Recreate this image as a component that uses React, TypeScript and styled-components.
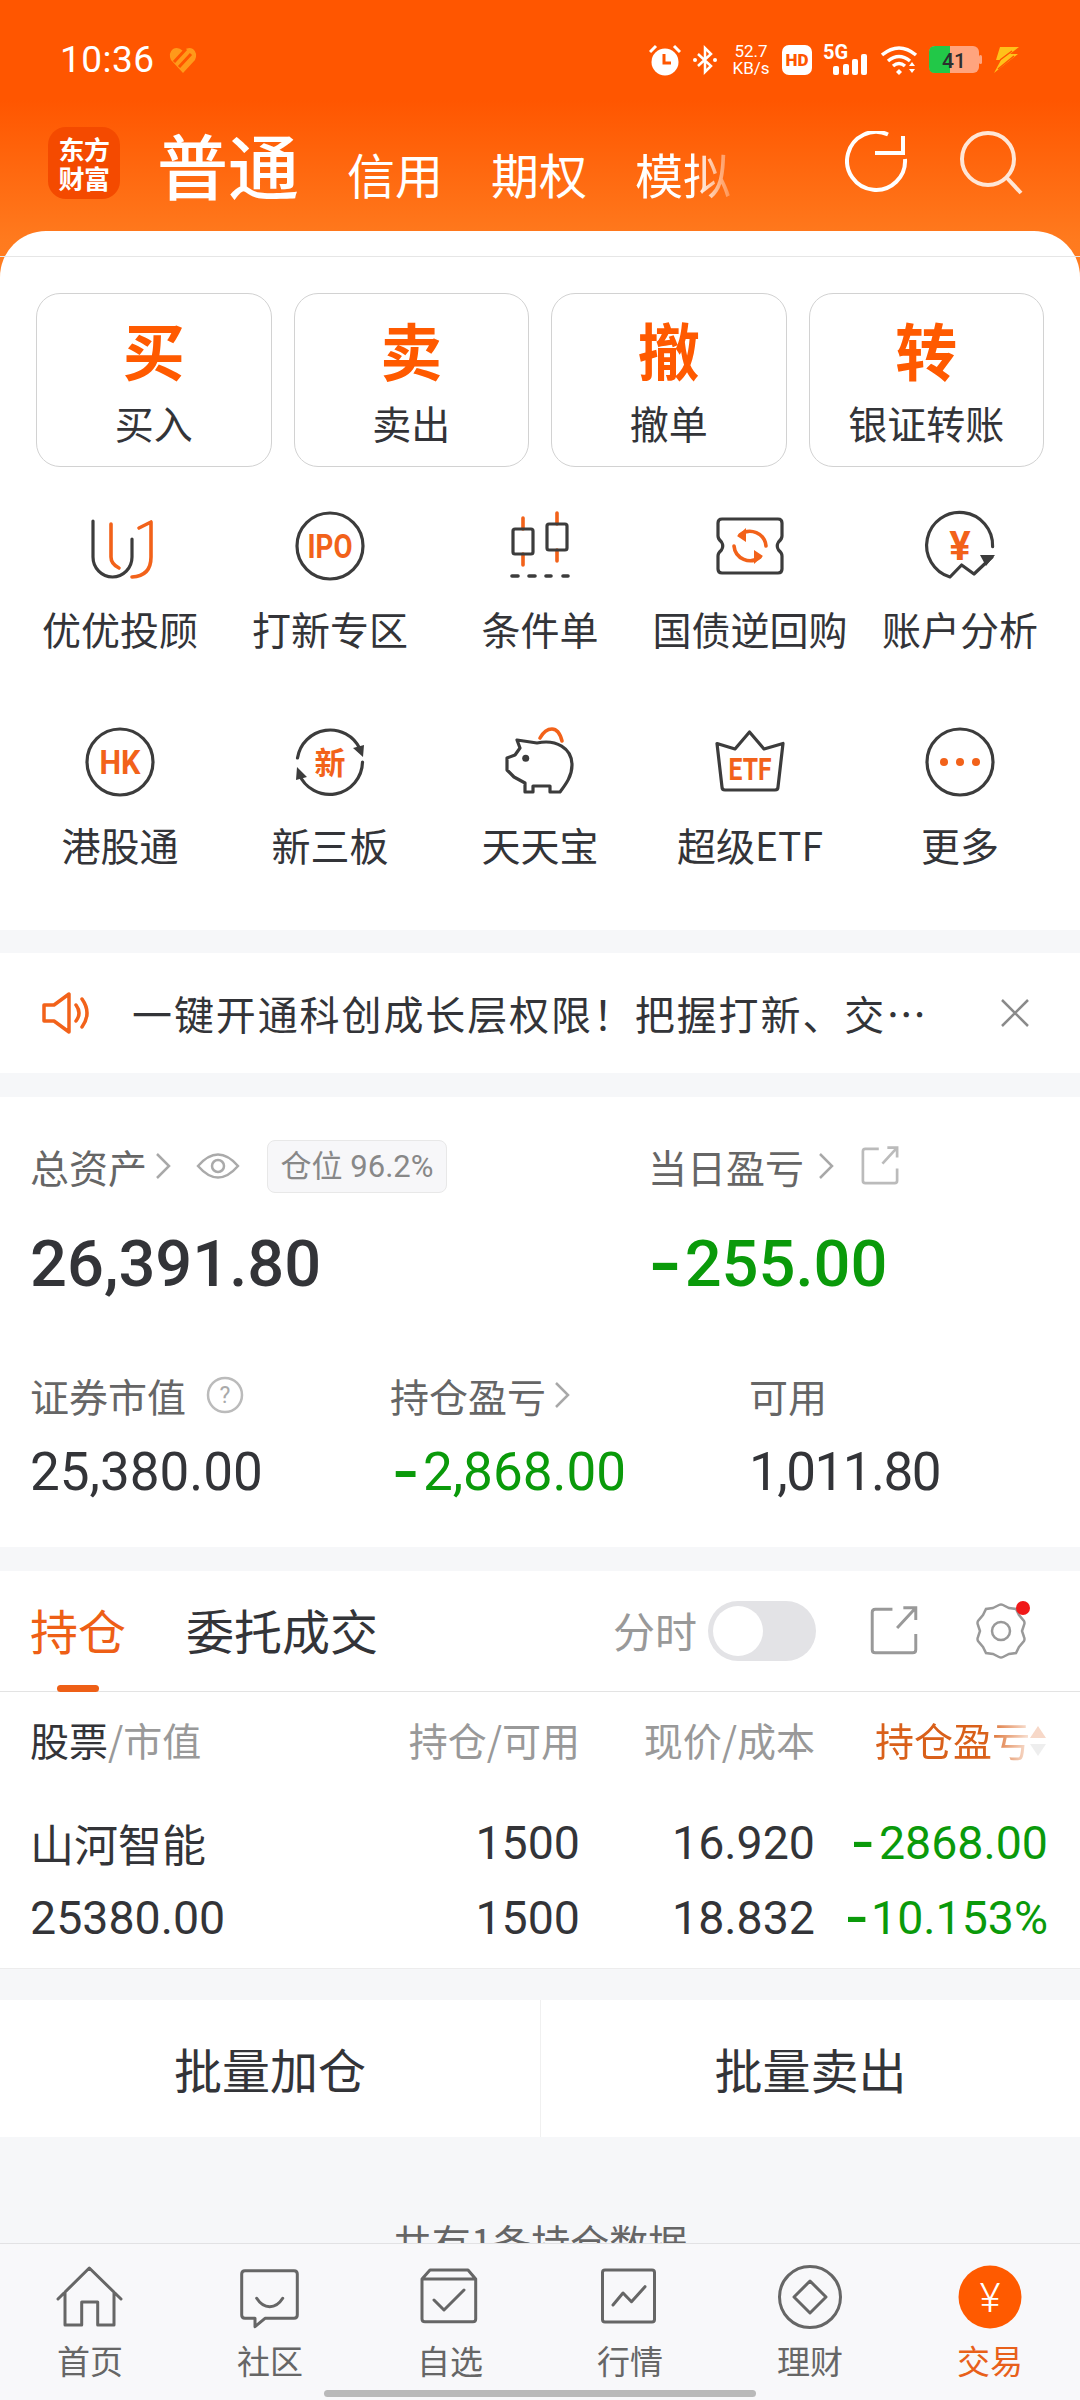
import React from "react";
import styled, { createGlobalStyle } from "styled-components";

const ORANGE = "#ff5a00";
const TAB_ORANGE = "#ee5f16";
const GREEN = "#0a9a0a";
const DARK = "#333438";
const CJK = `"Noto Sans CJK SC", sans-serif`;
const NUM = `Roboto, "Noto Sans CJK SC", sans-serif`;

const Global = createGlobalStyle`
  html, body { margin: 0; padding: 0; width: 1080px; height: 2400px; overflow: hidden; background: #f6f7f9; }
  * { box-sizing: border-box; }
  #root { width: 1080px; height: 2400px; font-family: ${CJK}; }
`;

const Page = styled.div`
  width: 1080px;
  height: 2400px;
  display: flex;
  flex-direction: column;
  background: #f6f7f9;
  overflow: hidden;
`;

/* ---------- header ---------- */
const TopArea = styled.header`
  height: 285px;
  flex: none;
  padding-top: 40px;
  background: linear-gradient(180deg, #ff5600 0px, #ff5600 100px, #ff7a1e 240px, #ff7f22 285px);
  color: #fff;
`;
const StatusBar = styled.div`
  height: 40px;
  display: flex;
  align-items: center;
  padding: 0 60px;
`;
const Clock = styled.span`
  font: 400 37px/40px ${NUM};
  letter-spacing: 0.5px;
`;
const StatusRight = styled.div`
  margin-left: auto;
  display: flex;
  align-items: center;
`;
const Speed = styled.div`
  width: 40px;
  margin: 0 11px 0 13px;
  text-align: center;
  font: 400 17px/17px ${NUM};
  white-space: nowrap;
`;
const NavRow = styled.nav`
  height: 72px;
  margin-top: 47px;
  padding-left: 48px;
  display: flex;
  align-items: flex-end;
`;
const Logo = styled.div`
  width: 72px;
  height: 72px;
  border-radius: 18px;
  background: #f44a00;
  color: #fff;
  font: 700 26px/29px ${CJK};
  text-align: center;
  padding-top: 7px;
  letter-spacing: -0.5px;
`;
const MainTab = styled.div`
  margin-left: 37px;
  font: 500 71px/84px ${CJK};
  margin-bottom: -6px;
`;
const SubTab = styled.div<{ $fade?: boolean }>`
  margin-left: 48px;
  font: 400 48px/62px ${CJK};
  margin-bottom: -5px;
  ${(p) => (p.$fade ? "mask-image: linear-gradient(90deg,#000 62%,rgba(0,0,0,.25) 100%);" : "")}
`;
const NavIcons = styled.div`
  margin-left: auto;
  padding-right: 56px;
  display: flex;
  gap: 49px;
  align-items: center;
  align-self: center;
`;

/* ---------- panel ---------- */
const Panel = styled.section`
  margin-top: -54px;
  position: relative;
  flex: none;
  background: #fff;
  border-radius: 46px 46px 0 0;
  padding: 25px 0 62px;
`;
const Hairline = styled.div`
  height: 1px;
  background: #e6e6e6;
`;
const TradeRow = styled.div`
  margin-top: 36px;
  padding: 0 36px;
  display: grid;
  grid-template-columns: repeat(4, 1fr);
  column-gap: 22px;
`;
const TradeCard = styled.div`
  height: 174px;
  border: 1px solid #d2d2d2;
  border-radius: 24px;
  display: flex;
  flex-direction: column;
  align-items: center;
`;
const TradeBig = styled.div`
  margin-top: 15px;
  font: 700 62px/80px ${CJK};
  color: ${ORANGE};
`;
const TradeLabel = styled.div`
  margin-top: 8px;
  font: 400 39px/50px ${CJK};
  color: ${DARK};
`;
const IconGrid = styled.div`
  margin-top: 39px;
  padding: 0 15px;
  display: grid;
  grid-template-columns: repeat(5, 210px);
  row-gap: 70px;
`;
const GridItem = styled.div`
  display: flex;
  flex-direction: column;
  align-items: center;
  gap: 18px;
`;
const GridLabel = styled.div`
  font: 400 39px/48px ${CJK};
  color: ${DARK};
  white-space: nowrap;
`;

/* ---------- notice ---------- */
const Notice = styled.section`
  margin-top: 23px;
  height: 120px;
  flex: none;
  background: #fff;
  display: flex;
  align-items: center;
  padding: 0 50px 0 42px;
`;
const NoticeText = styled.div`
  margin-left: 41px;
  font: 400 40px/48px ${CJK};
  color: ${DARK};
  letter-spacing: 1.9px;
  white-space: nowrap;
`;
const NoticeClose = styled.div`
  margin-left: auto;
  display: flex;
`;

/* ---------- assets ---------- */
const Assets = styled.section`
  margin-top: 24px;
  height: 450px;
  flex: none;
  background: #fff;
  padding: 43px 0 0 30px;
`;
const TopStats = styled.div`
  display: grid;
  grid-template-columns: 618px 1fr;
`;
const BottomStats = styled.div`
  margin-top: 65px;
  display: grid;
  grid-template-columns: 360px 359px 1fr;
`;
const StatLabel = styled.div`
  height: 52px;
  display: flex;
  align-items: center;
  font: 400 39px/52px ${CJK};
  color: #666;
  white-space: nowrap;
`;
const Chip = styled.span`
  margin-left: 27px;
  height: 53px;
  width: 180px;
  display: flex;
  align-items: center;
  justify-content: center;
  background: #f7f7f9;
  border: 1px solid #e8e8e8;
  border-radius: 8px;
  color: #888;
  font: 400 31px/1 ${NUM};
  white-space: nowrap;
`;
const BigValue = styled.div<{ $green?: boolean }>`
  margin-top: 32px;
  font: 500 65px/80px ${NUM};
  color: ${(p) => (p.$green ? GREEN : DARK)};
`;
const SmallValue = styled.div<{ $green?: boolean; $tight?: number }>`
  margin-top: 21px;
  font: 400 53px/60px ${NUM};
  letter-spacing: ${(p) => p.$tight ?? 0}px;
  color: ${(p) => (p.$green ? GREEN : DARK)};
`;
const Hyphen = styled.span<{ $left: number; $right: number }>`
  display: inline-block;
  font-weight: 700;
  transform: scaleX(1.35);
  transform-origin: right center;
  margin-left: ${(p) => p.$left}px;
  margin-right: ${(p) => p.$right}px;
`;

/* ---------- holdings ---------- */
const Holdings = styled.section`
  margin-top: 24px;
  flex: none;
  background: #fff;
  border-bottom: 1px solid #ececec;
`;
const TabRow = styled.div`
  position: relative;
  height: 121px;
  padding: 0 50px 1px 30px;
  border-bottom: 1px solid #e3e3e3;
  display: flex;
  align-items: center;
`;
const Tab = styled.div<{ $active?: boolean }>`
  font: 400 48px/60px ${CJK};
  color: ${(p) => (p.$active ? TAB_ORANGE : DARK)};
  margin-right: 60px;
  padding-bottom: 4px;
`;
const Underline = styled.div`
  position: absolute;
  left: 57px;
  bottom: -1px;
  width: 42px;
  height: 7px;
  border-radius: 4px;
  background: ${TAB_ORANGE};
`;
const TabTools = styled.div`
  margin-left: auto;
  display: flex;
  align-items: center;
`;
const ToolText = styled.span`
  font: 400 42px/50px ${CJK};
  color: #999;
  padding-bottom: 2px;
`;
const Toggle = styled.div`
  margin-left: 11px;
  width: 108px;
  height: 60px;
  border-radius: 30px;
  background: #e3e3e6;
  padding: 5px;
`;
const Knob = styled.div`
  width: 50px;
  height: 50px;
  border-radius: 50%;
  background: #fff;
`;
const ToolIcon = styled.div<{ $gap: number }>`
  margin-left: ${(p) => p.$gap}px;
  display: flex;
`;
const TableRow = styled.div<{ $head?: boolean }>`
  height: ${(p) => (p.$head ? "98px" : "75px")};
  padding: 0 32px 0 30px;
  display: grid;
  grid-template-columns: 340px 210px 235px 233px;
  align-items: center;
`;
const Cell = styled.div<{ $right?: boolean; $green?: boolean; $num?: boolean }>`
  text-align: ${(p) => (p.$right ? "right" : "left")};
  white-space: nowrap;
  font: 400 ${(p) => (p.$num ? "46.5px" : "44px")}/75px ${(p) => (p.$num ? NUM : CJK)};
  color: ${(p) => (p.$green ? GREEN : DARK)};
`;
const HeadCell = styled.div<{ $right?: boolean }>`
  text-align: ${(p) => (p.$right ? "right" : "left")};
  font: 400 39px/48px ${CJK};
  color: #999;
  white-space: nowrap;
  padding-bottom: 4px;
`;
const HeadStrong = styled.span`
  color: ${DARK};
`;
const SortCell = styled.div`
  display: flex;
  justify-content: flex-end;
  align-items: center;
`;
const SortText = styled.span`
  width: 153px;
  overflow: hidden;
  font: 400 39px/48px ${CJK};
  color: #d9601a;
  white-space: nowrap;
  padding-bottom: 4px;
  mask-image: linear-gradient(90deg, #000 72%, rgba(0, 0, 0, 0.2) 100%);
`;
const TableBody = styled.div`
  padding: 16px 0 12px;
`;

/* ---------- batch + footer ---------- */
const Batch = styled.section`
  margin-top: 31px;
  height: 137px;
  flex: none;
  background: #fff;
  display: grid;
  grid-template-columns: 1fr 1fr;
`;
const BatchButton = styled.div<{ $divider?: boolean }>`
  display: flex;
  align-items: center;
  justify-content: center;
  font: 400 48px/60px ${CJK};
  color: ${DARK};
  padding-bottom: 2px;
  border-left: ${(p) => (p.$divider ? "1px solid #f0f0f0" : "none")};
`;
const Remainder = styled.div`
  height: 106px;
  flex: none;
  overflow: hidden;
  padding-top: 80px;
  text-align: center;
  font: 400 39px/48px ${CJK};
  color: #666;
`;
const Footer = styled.footer`
  height: 157px;
  flex: none;
  border-top: 1px solid #e2e2e4;
  background: #f8f8fa;
  display: flex;
  flex-direction: column;
`;
const FooterTabs = styled.div`
  display: grid;
  grid-template-columns: repeat(6, 180px);
  padding-top: 18px;
`;
const FooterItem = styled.div`
  display: flex;
  flex-direction: column;
  align-items: center;
`;
const FooterLabel = styled.div<{ $active?: boolean }>`
  margin-top: 8px;
  font: 400 33px/40px ${CJK};
  color: ${(p) => (p.$active ? "#e8601a" : "#666")};
`;
const HomeBar = styled.div`
  align-self: center;
  margin-top: 10px;
  width: 432px;
  height: 7px;
  border-radius: 4px;
  background: #b9b9b9;
`;
const LabelIcon = styled.span`
  margin-left: 24px;
  display: flex;
`;

/* ---------- icons ---------- */
const S = { fill: "none", stroke: "#3c3c3c", strokeWidth: 3.2, strokeLinecap: "round", strokeLinejoin: "round" } as const;
const O = { ...S, stroke: "#f2621a", strokeWidth: 3.6 } as const;
const numFont = "Roboto, sans-serif";

const Ico = ({ children }: { children: React.ReactNode }) => (
  <svg width="80" height="80" viewBox="0 0 80 80">{children}</svg>
);
const T = ({ x = 40, y, size, w, children }: { x?: number; y: number; size: number; w?: number; children: React.ReactNode }) => (
  <text x={x} y={y} textAnchor="middle" fontFamily={numFont} fontWeight={700} fontSize={size} fill="#f2621a"
    {...(w ? { textLength: w, lengthAdjust: "spacingAndGlyphs" } : {})}>{children}</text>
);

const icons: Record<string, React.ReactNode> = {
  u: (<Ico><path {...S} d="M13 15V51A19.5 20 0 0 0 52 51V33" /><path {...O} d="M31 18V51Q31 58 39 62M59 22L71 16V51Q71 70 52 71" /></Ico>),
  ipo: (<Ico><circle {...S} cx="40" cy="40" r="33" /><T y="52" size="33" w="45">IPO</T></Ico>),
  candle: (<Ico>
    <path {...O} d="M23 12V23M23 48V59M57 7V18M57 44V55" />
    <rect {...S} x="13" y="23" width="20" height="25" rx="2" /><rect {...S} x="47" y="18" width="20" height="26" rx="2" />
    <path {...S} strokeWidth={3.6} d="M12 70H18M29 70H35M46 70H51M63 70H68" />
  </Ico>),
  ticket: (<Ico>
    <path {...S} d="M12 13H68Q72 13 72 17V30Q72 33 68.500 36Q66 40 68.500 44Q72 47 72 50V63Q72 67 68 67H12Q8 67 8 63V50Q8 47 11.500 44Q14 40 11.500 36Q8 33 8 30V17Q8 13 12 13Z" />
    <path {...O} d="M30 29A16 16 0 0 1 56 40M50 51A16 16 0 0 1 24 40" />
    <path fill="#f2621a" d="M27 30L36 22V36ZM53 50L44 44V58Z" />
  </Ico>),
  yuan: (<Ico>
    <path {...S} d="M72.600 40.600A33 33 0 1 0 30 71L41.600 59L54 68L72 51" />
    <path fill="#3c3c3c" d="M60 49L75 49L66 60Z" />
    <T y="54" size="40">¥</T>
  </Ico>),
  hk: (<Ico><circle {...S} cx="40" cy="40" r="33" /><T y="52" size="33" w="41">HK</T></Ico>),
  xin: (<Ico>
    <path {...S} d="M7.500 36A33 33 0 0 1 70 27M72.500 40A33 33 0 0 1 9 52" />
    <path fill="#3c3c3c" d="M63 26L74 23L73 35ZM17 55L6 58L7 45Z" />
    <text x="40" y="52" textAnchor="middle" fontFamily={CJK} fontWeight={700} fontSize="31" fill="#f2621a">新</text>
  </Ico>),
  pig: (<Ico>
    <path {...O} d="M40 16Q45 7 52 7Q59 7 62 19" />
    <path {...S} d="M17 18L37 21C56 17 72 26 72 43C72 54 66 62 60 70H50V64H33V70H25V61L14 55L7 48V36L15 33L20 26Z" />
    <circle cx="25.700" cy="36.300" r="3.500" fill="#3c3c3c" />
  </Ico>),
  etf: (<Ico>
    <path {...S} d="M39.500 10L54 27L73 21.500L68 65Q68 68 65 68H15Q12 68 12 65L7 21.500L25 27Z" />
    <T y="58" size="31" w="43">ETF</T>
  </Ico>),
  more: (<Ico><circle {...S} cx="40" cy="40" r="33" />
    <circle cx="24" cy="40" r="4" fill="#f2621a" /><circle cx="40" cy="40" r="4" fill="#f2621a" /><circle cx="56" cy="40" r="4" fill="#f2621a" /></Ico>),
};

const gridItems: [string, string][] = [
  ["u", "优优投顾"], ["ipo", "打新专区"], ["candle", "条件单"], ["ticket", "国债逆回购"], ["yuan", "账户分析"],
  ["hk", "港股通"], ["xin", "新三板"], ["pig", "天天宝"], ["etf", "超级ETF"], ["more", "更多"],
];

const ChevronSvg = styled.svg<{ $ml: number }>`
  margin-left: ${(p) => p.$ml}px;
`;
const Chevron = ({ ml = 8 }: { ml?: number }) => (
  <ChevronSvg $ml={ml} width="16" height="28" viewBox="0 0 16 28">
    <path d="M2 2L14 14L2 26" fill="none" stroke="#a8a8a8" strokeWidth="2.500" />
  </ChevronSvg>
);
const Export = ({ size, color, sw }: { size: number; color: string; sw: number }) => (
  <svg width={size} height={size} viewBox="0 0 36 36">
    <path d="M17 4H6Q4 4 4 6V30Q4 32 6 32H30Q32 32 32 30V20M20 16L32 3M24 3H32V11" fill="none" stroke={color} strokeWidth={sw} />
  </svg>
);

const IconGap = styled.svg<{ $ml: number; $mr?: number }>`
  flex: none;
  margin-left: ${(p) => p.$ml}px;
  margin-right: ${(p) => p.$mr ?? 0}px;
`;

const fT = { fill: "none", stroke: "#666", strokeWidth: 3, strokeLinejoin: "round", strokeLinecap: "round" } as const;
const footer: [string, React.ReactNode][] = [
  ["首页", <path {...fT} d="M3 37L34.300 6L66 37M10 30V63H26.700V40H42.700V63H59V30" />],
  ["社区", <path {...fT} d="M10 8.700H59Q62.300 8.700 62.300 12V53Q62.300 56.300 59 56.300H30L20 64.700V56.300H10Q6.700 56.300 6.700 53V12Q6.700 8.700 10 8.700ZM21.700 36.300Q27 44.700 34.700 44.700Q42.500 44.700 47.700 36.300" />],
  ["自选", <path {...fT} d="M15 8H53L60.700 17V57Q60.700 59.700 58 59.700H10Q7 59.700 7 57V17ZM7 17H60.700M19 38L29 48L49 28" />],
  ["行情", <path {...fT} d="M10 8H57Q59.500 8 59.500 10.500V57.500Q59.500 60 57 60H10Q7.500 60 7.500 57.500V10.500Q7.500 8 10 8ZM18 43L28 31L36.500 39.700L50 24.700" />],
  ["理财", <><circle {...fT} cx="35" cy="35" r="30.500" /><path {...fT} d="M35 19L51 35L35 51L19 35Z" /></>],
  ["交易", <><circle cx="35" cy="35" r="31.500" fill={ORANGE} /><text x="35" y="50" textAnchor="middle" fontFamily={numFont} fontWeight={300} fontSize="40" fill="#fff">¥</text></>],
];

export default function App() {
  return (
    <Page>
      <Global />
      <TopArea>
        <StatusBar>
          <Clock>10:36</Clock>
          <IconGap $ml={13} width="30" height="30" viewBox="0 0 30 30">
            <path d="M15 28L3 15Q0 8 5 4Q10 1 15 6Q20 1 25 4Q30 8 27 15Z" fill="#ff9a1a" />
            <path d="M6 17L18 4M11 22L23 9" stroke="#ff5600" strokeWidth="3" />
          </IconGap>
          <StatusRight>
            <svg width="32" height="32" viewBox="0 0 32 32">
              <circle cx="16" cy="18" r="13.500" fill="#fff" />
              <path d="M15 10V19H22" fill="none" stroke="#ff5600" strokeWidth="3" />
              <path d="M1 8L7 2M31 8L25 2" stroke="#fff" strokeWidth="3" />
            </svg>
            <IconGap $ml={11} width="26" height="30" viewBox="0 0 26 30">
              <path d="M6 9L19 21L13 27V3L19 9L6 21" fill="none" stroke="#fff" strokeWidth="2.500" />
              <circle cx="3" cy="15" r="2" fill="#fff" /><circle cx="23" cy="15" r="2" fill="#fff" />
            </IconGap>
            <Speed>52.7<br />KB/s</Speed>
            <svg width="30" height="30" viewBox="0 0 30 30">
              <rect width="30" height="30" rx="7" fill="#fff" />
              <text x="15" y="21" textAnchor="middle" fontFamily={numFont} fontWeight={900} fontSize="17" fill="#ff5600">HD</text>
            </svg>
            <IconGap $ml={11} width="46" height="32" viewBox="0 0 46 32">
              <text x="0" y="15" fontFamily={numFont} fontWeight={700} fontSize="20" fill="#fff">5G</text>
              <rect x="10" y="22" width="6" height="9" rx="2" fill="#fff" /><rect x="20" y="20" width="6" height="11" rx="2" fill="#fff" />
              <rect x="29" y="15" width="6" height="16" rx="2" fill="#fff" /><rect x="38" y="10" width="6" height="21" rx="2" fill="#fff" />
            </IconGap>
            <IconGap $ml={12} width="38" height="30" viewBox="0 0 38 30">
              <path d="M1 10Q18 -4 35 10M7 16Q18 7 29 16M12 21Q18 16 24 21" fill="none" stroke="#fff" strokeWidth="3.500" />
              <path d="M15 27L18 24L21 27L18 30Z" fill="#fff" />
              <path d="M28 21L31 17L34 21ZM28 24H34L31 28Z" fill="#fff" />
            </IconGap>
            <IconGap $ml={10} width="54" height="30" viewBox="0 0 54 30">
              <rect x="0" y="1" width="50" height="27" rx="6" fill="#ffa47e" />
              <path d="M6 1H21V28H6Q0 28 0 22V7Q0 1 6 1Z" fill="#22c848" />
              <rect x="50" y="10" width="3" height="9" rx="1.500" fill="#ffa47e" />
              <text x="25" y="23" textAnchor="middle" fontFamily={numFont} fontWeight={500} fontSize="21" fill="#2d2d2d">41</text>
            </IconGap>
            <IconGap $ml={9} $mr={-2} width="30" height="30" viewBox="0 0 30 30">
              <path d="M8 2H27L18 9H26L2 28L9 15H4Z" fill="#ffc21a" />
              <path d="M8 15L20 6M6 24L22 11" stroke="#ff5600" strokeWidth="1.500" />
            </IconGap>
          </StatusRight>
        </StatusBar>
        <NavRow>
          <Logo>东方<br />财富</Logo>
          <MainTab>普通</MainTab>
          <SubTab>信用</SubTab>
          <SubTab>期权</SubTab>
          <SubTab $fade>模拟</SubTab>
          <NavIcons>
            <svg width="64" height="64" viewBox="0 0 64 64">
              <path d="M43 3.500A29 29 0 1 0 60 28" fill="none" stroke="#fff" strokeWidth="4" />
              <path d="M30 22H58V5" fill="none" stroke="#fff" strokeWidth="4" />
            </svg>
            <svg width="66" height="66" viewBox="0 0 66 66">
              <circle cx="30" cy="29" r="26" fill="none" stroke="#ffe6d6" strokeWidth="4" />
              <path d="M49 48L63 63" stroke="#ffe6d6" strokeWidth="4" />
            </svg>
          </NavIcons>
        </NavRow>
      </TopArea>

      <Panel>
        <Hairline />
        <TradeRow>
          {[["买", "买入"], ["卖", "卖出"], ["撤", "撤单"], ["转", "银证转账"]].map(([b, l]) => (
            <TradeCard key={b}>
              <TradeBig>{b}</TradeBig>
              <TradeLabel>{l}</TradeLabel>
            </TradeCard>
          ))}
        </TradeRow>
        <IconGrid>
          {gridItems.map(([k, l]) => (
            <GridItem key={k}>
              {icons[k]}
              <GridLabel>{l}</GridLabel>
            </GridItem>
          ))}
        </IconGrid>
      </Panel>

      <Notice>
        <IconGap $ml={0} width="49" height="44" viewBox="0 0 49 44">
          <path d="M2 14H12L27 3V41L12 30H2Z" fill="none" stroke="#f2621a" strokeWidth="3.500" strokeLinejoin="round" />
          <path d="M34 14Q40 22 34 30M40 8Q50 22 40 36" fill="none" stroke="#f2621a" strokeWidth="3.500" strokeLinecap="round" />
        </IconGap>
        <NoticeText>一键开通科创成长层权限！把握打新、交…</NoticeText>
        <NoticeClose>
          <svg width="30" height="30" viewBox="0 0 30 30"><path d="M2 2L28 28M28 2L2 28" stroke="#8a8a8a" strokeWidth="2.500" /></svg>
        </NoticeClose>
      </Notice>

      <Assets>
        <TopStats>
          <div>
            <StatLabel>
              总资产<Chevron />
              <IconGap $ml={25} width="44" height="30" viewBox="0 0 44 30">
                <path d="M2 15Q22 -8 42 15Q22 38 2 15Z" fill="none" stroke="#aaa" strokeWidth="2.500" />
                <circle cx="22" cy="15" r="6" fill="none" stroke="#aaa" strokeWidth="2.500" />
              </IconGap>
              <Chip>仓位 96.2%</Chip>
            </StatLabel>
            <BigValue>26,391.80</BigValue>
          </div>
          <div>
            <StatLabel>
              当日盈亏<Chevron ml={14} />
              <LabelIcon><Export size={44} color="#bbb" sw={2.2} /></LabelIcon>
            </StatLabel>
            <BigValue $green><Hyphen $left={9} $right={2}>-</Hyphen>255.00</BigValue>
          </div>
        </TopStats>
        <BottomStats>
          <div>
            <StatLabel>
              证券市值
              <IconGap $ml={20} width="38" height="38" viewBox="0 0 38 38">
                <circle cx="19" cy="19" r="17" fill="none" stroke="#bbb" strokeWidth="2.500" />
                <text x="19" y="27" textAnchor="middle" fontFamily={numFont} fontSize="23" fill="#aaa">?</text>
              </IconGap>
            </StatLabel>
            <SmallValue>25,380.00</SmallValue>
          </div>
          <div>
            <StatLabel>持仓盈亏<Chevron /></StatLabel>
            <SmallValue $green><Hyphen $left={9} $right={3}>-</Hyphen>2,868.00</SmallValue>
          </div>
          <div>
            <StatLabel>可用</StatLabel>
            <SmallValue $tight={-1.5}>1,011.80</SmallValue>
          </div>
        </BottomStats>
      </Assets>

      <Holdings>
        <TabRow>
          <Tab $active>持仓</Tab>
          <Tab>委托成交</Tab>
          <Underline />
          <TabTools>
            <ToolText>分时</ToolText>
            <Toggle><Knob /></Toggle>
            <ToolIcon $gap={50}><Export size={56} color="#999" sw={1.9} /></ToolIcon>
            <ToolIcon $gap={50}>
              <svg width="58" height="60" viewBox="0 0 58 60">
                <path d="M21 7L27 4Q29 3 31 4L37 7L44 8L47 14L52 20Q53 22 52 24L50 30L52 36Q53 38 52 40L47 46L44 52L37 53L31 56Q29 57 27 56L21 53L14 52L11 46L6 40Q5 38 6 36L8 30L6 24Q5 22 6 20L11 14L14 8Z" fill="none" stroke="#999" strokeWidth="2.500" />
                <circle cx="29" cy="30" r="9" fill="none" stroke="#999" strokeWidth="2.500" />
                <circle cx="51" cy="7" r="7" fill="#f01818" />
              </svg>
            </ToolIcon>
          </TabTools>
        </TabRow>
        <TableRow $head>
          <HeadCell><HeadStrong>股票</HeadStrong>/市值</HeadCell>
          <HeadCell $right>持仓/可用</HeadCell>
          <HeadCell $right>现价/成本</HeadCell>
          <SortCell>
            <SortText>持仓盈亏</SortText>
            <svg width="20" height="34" viewBox="0 0 20 34">
              <path d="M10 2L18 14H2Z" fill="#f7d8c8" /><path d="M10 32L18 20H2Z" fill="#eee" />
            </svg>
          </SortCell>
        </TableRow>
        <TableBody>
          <TableRow>
            <Cell>山河智能</Cell><Cell $right $num>1500</Cell><Cell $right $num>16.920</Cell>
            <Cell $right $num $green><Hyphen $left={0} $right={4}>-</Hyphen>2868.00</Cell>
          </TableRow>
          <TableRow>
            <Cell $num>25380.00</Cell><Cell $right $num>1500</Cell><Cell $right $num>18.832</Cell>
            <Cell $right $num $green><Hyphen $left={0} $right={2}>-</Hyphen>10.153%</Cell>
          </TableRow>
        </TableBody>
      </Holdings>

      <Batch>
        <BatchButton>批量加仓</BatchButton>
        <BatchButton $divider>批量卖出</BatchButton>
      </Batch>
      <Remainder>共有1条持仓数据</Remainder>

      <Footer>
        <FooterTabs>
          {footer.map(([l, d], i) => (
            <FooterItem key={l}>
              <svg width="70" height="70" viewBox="0 0 70 70">{d}</svg>
              <FooterLabel $active={i === 5}>{l}</FooterLabel>
            </FooterItem>
          ))}
        </FooterTabs>
        <HomeBar />
      </Footer>
    </Page>
  );
}
